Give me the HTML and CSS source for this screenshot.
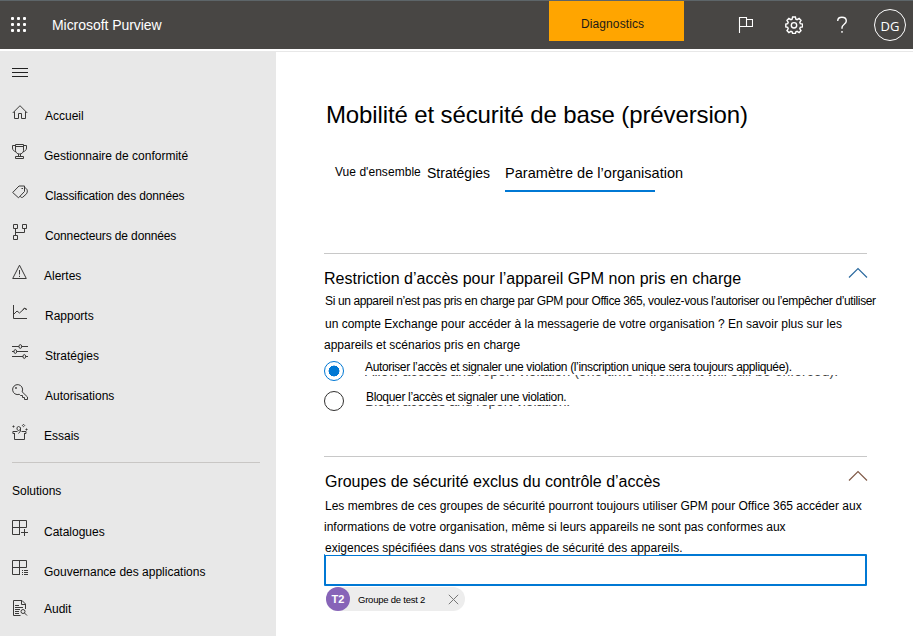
FILE: index.html
```html
<!DOCTYPE html>
<html lang="fr">
<head>
<meta charset="utf-8">
<title>Microsoft Purview</title>
<link rel="stylesheet" href="styles.css">
</head>
<body>
<header class="topbar">
  <svg class="waffle" width="16" height="16" viewBox="0 0 16 16"><g fill="#fff"><rect x="0" y="0" width="3" height="3" rx="1"/><rect x="6" y="0" width="3" height="3" rx="1"/><rect x="12" y="0" width="3" height="3" rx="1"/><rect x="0" y="6" width="3" height="3" rx="1"/><rect x="6" y="6" width="3" height="3" rx="1"/><rect x="12" y="6" width="3" height="3" rx="1"/><rect x="0" y="12" width="3" height="3" rx="1"/><rect x="6" y="12" width="3" height="3" rx="1"/><rect x="12" y="12" width="3" height="3" rx="1"/></g></svg>
  <span class="brand">Microsoft Purview</span>
  <div class="diag">Diagnostics</div>
  <div class="tools">
    <svg class="flag" width="16" height="18" viewBox="0 0 16 18"><path d="M2.500 17V1.500H9.500V10.500H2.500M9.500 3.500H15.500V10.500H9.500V8" /></svg>
    <svg class="gear" width="18" height="18" viewBox="0 0 18 18"><path d="M7.600 1h2.800l.5 2.200 1.200.5 2-1.200 1.900 1.900-1.200 2 .5 1.200 2.200.5v2.800l-2.200.5-.5 1.200 1.200 2-1.900 1.900-2-1.200-1.200.5-.5 1.700H7.600l-.5-1.700-1.200-.5-2 1.200L2 14.600l1.200-2-.5-1.200L.8 10.900V8.100l1.900-.5.5-1.200-1.200-2 1.900-1.900 2 1.200 1.200-.5z"/><circle cx="9" cy="9.300" r="2.700"/></svg>
    <svg class="help" width="12" height="18" viewBox="0 0 12 18"><path d="M1.700 5C1.700 2.700 3.300 1.300 5.900 1.300S10.300 2.800 10.300 4.900C10.300 8.200 6 8.300 6 11.800V12.700M6 15V16.700"/></svg>
    <span class="avatar">DG</span>
  </div>
</header>
<div class="shell">
  <aside class="side">
    <svg class="burger" width="16" height="10" viewBox="0 0 16 10"><path d="M0 .5H16M0 4.500H16M0 8.500H16"/></svg>
    <nav class="nav">
      <a class="item"><svg class="ico" viewBox="0 0 16 16"><path d="M.7 9 8 1.700 15.300 9M2.500 7.500V14.500H6.500V9.500H9.500V14.500H13.500V7.500"/></svg><span class="in">Accueil</span></a>
      <a class="item"><svg class="ico" viewBox="0 0 16 16"><path d="M3.500.5H11.500V6.500C11.500 8.500 9.800 10 7.500 10S3.500 8.500 3.500 6.500ZM3.500 1.500H.5V4C.5 6 2 7.500 4 7.500M11.500 1.500H14.500V4C14.500 6 13 7.500 11 7.500M6.500 10V12.500M8.500 10V12.500M3.500 14.500V12.500H11.500V14.500ZM3 2.500H12"/></svg><span>Gestionnaire de conformité</span></a>
      <a class="item"><svg class="ico" viewBox="0 0 16 16"><path d="M.7 8.500 7 2H12.500V7.500L6.500 13.800ZM12.500 3.500C15.500 4.500 16 7.500 14.500 9.800L10.800 13.200C10 13.800 8.800 13.500 8.200 12.300M9.500 4.500H11"/></svg><span class="in tight">Classification des données</span></a>
      <a class="item"><svg class="ico" viewBox="0 0 16 16"><path d="M1.500.5H5.500V4.500H1.500ZM10.500.5H14.500V4.500H10.500ZM1.500 11.500H5.500V15.500H1.500ZM3.500 4.500V11.500M3.500 8.500H12.500V4.500"/></svg><span class="in tight">Connecteurs de données</span></a>
      <a class="item"><svg class="ico" viewBox="0 0 16 16"><path d="M7.500 1.200 14.300 14.500H.7ZM7.500 6V10.500M7.500 11.800V13"/></svg><span>Alertes</span></a>
      <a class="item"><svg class="ico" viewBox="0 0 16 16"><path d="M1.500 1V14.500H15M1.500 10.500 5 7 7.500 9 12.500 4.500 14.500 5.500M11 5.500 12.500 4 15 5.500"/></svg><span class="in">Rapports</span></a>
      <a class="item"><svg class="ico" viewBox="0 0 16 16"><path d="M0 2.500H7M9.500 2.500H16M0 7.500H2M4.500 7.500H16M0 12.500H11M13.500 12.500H16"/><ellipse cx="8.300" cy="2.500" rx="1.300" ry="2"/><ellipse cx="3.300" cy="7.500" rx="1.300" ry="2"/><ellipse cx="12.300" cy="12.500" rx="1.300" ry="2"/></svg><span class="in">Stratégies</span></a>
      <a class="item"><svg class="ico" viewBox="0 0 16 16"><path d="M10 7.700 15.500 13V15.500H12.500V13.500H10.500V11.500H8.500L7.300 10.300A5 5 0 1 1 10.300 7.300L10 8"/><circle cx="4" cy="4" r=".6"/></svg><span class="in">Autorisations</span></a>
      <a class="item"><svg class="ico" viewBox="0 0 16 16"><path d="M2.500 9V15.500H12.500V9M5.500 7.500H.9V9.500H3M9.500 7.500H14V9.500H12M6.500 9.500 8.500 7V4.500M5 3.500 6.500 2.500 8.500 3.500V5.500L6.500 6.500 5 5.500ZM11.500.3 12.700 1.500 11.500 2.700 10.300 1.500ZM1.500 1.500V3.500M.5 2.500H2.500M14.500 4.500V6.500M13.500 5.500H15.500"/></svg><span>Essais</span></a>
    </nav>
    <hr class="rule">
    <div class="group">Solutions</div>
    <nav class="nav2">
      <a class="item"><svg class="ico" viewBox="0 0 16 16"><path d="M8 14.500H.5V.5H14.500V7.500H.5M7.500.5V14.500M12.500 9V16M9 12.500H16"/></svg><span>Catalogues</span></a>
      <a class="item"><svg class="ico" viewBox="0 0 16 16"><path d="M8 14.500H.5V.5H14.500V7.500H.5M7.500.5V14.500M10 10.500H11M12 10.500H16M10 12.500H11M12 12.500H16M10 14.500H11M12 14.500H16"/></svg><span>Gouvernance des applications</span></a>
      <a class="item audit"><svg class="ico" viewBox="0 0 16 16"><path d="M8.500 15.500H1.500V.5H10L13.500 4V9M9.500.5V4.500H13.500M3 5.500H7M3 7.500H11M3 9.500H8M3 11.500H7M3 13.500H7"/><circle cx="11" cy="11.500" r="2"/><path d="M12.500 13 15 15.500"/></svg><span>Audit</span></a>
    </nav>
  </aside>
  <main class="main">
    <h1>Mobilité et sécurité de base (préversion)</h1>
    <div class="tabs">
      <span class="tab small">Vue d'ensemble</span>
      <span class="tab">Stratégies</span>
      <span class="tab active">Paramètre de l’organisation</span>
    </div>
    <section class="panel first">
      <div class="head"><h2>Restriction d’accès pour l’appareil GPM non pris en charge</h2><svg class="chev blue" width="20" height="12" viewBox="0 0 20 12"><path d="M1 10.500 10 1.500 19 10.500"/></svg></div>
      <p class="line a1">Si un appareil n’est pas pris en charge par GPM pour Office 365, voulez-vous l’autoriser ou l’empêcher d’utiliser</p>
      <p class="line a2">un compte Exchange pour accéder à la messagerie de votre organisation ? En savoir plus sur les</p>
      <p class="line a3">appareils et scénarios pris en charge</p>
      <div class="option"><i class="radio on"></i><div class="text"><span class="o1">Autoriser l’accès et signaler une violation (l’inscription unique sera toujours appliquée).</span><span class="ghost"><span>Allow access and report violation (one-time enrollment will still be enforced).</span></span></div></div>
      <div class="option"><i class="radio"></i><div class="text"><span class="o2">Bloquer l’accès et signaler une violation.</span><span class="ghost g2"><span>Block access and report violation.</span></span></div></div>
    </section>
    <section class="panel second">
      <div class="head"><h2>Groupes de sécurité exclus du contrôle d’accès</h2><svg class="chev brown" width="20" height="12" viewBox="0 0 20 12"><path d="M1 10.500 10 1.500 19 10.500"/></svg></div>
      <p class="line b1">Les membres de ces groupes de sécurité pourront toujours utiliser GPM pour Office 365 accéder aux</p>
      <p class="line b2">informations de votre organisation, même si leurs appareils ne sont pas conformes aux</p>
      <p class="line b3">exigences spécifiées dans vos stratégies de sécurité des appareils.</p>
      <div class="field"></div>
      <div class="chip"><b>T2</b><span>Groupe de test 2</span><svg width="11" height="11" viewBox="0 0 11 11"><path d="M.8.8 10.200 10.200M10.200.8.8 10.200"/></svg></div>
    </section>
  </main>
</div>
</body>
</html>
```
FILE: styles.css
```css
* { box-sizing: border-box; }
body {
  margin: 0;
  width: 913px;
  height: 636px;
  overflow: hidden;
  background: #fff;
  color: #000;
  font: 12px "Liberation Sans", Arial, sans-serif;
}
h1, h2, p { margin: 0; font-weight: 400; white-space: nowrap; }
svg { display: block; flex: none; fill: none; }

.topbar {
  display: flex;
  height: 49px;
  background: #484644;
  border-top: 1px solid #5d6569;
  color: #fff;
}
.waffle { margin: 16px 0 0 11px; }
.brand { width: 522px; padding-left: 25px; font-size: 14px; line-height: 48px; letter-spacing: -.05px; }
.diag {
  width: 135px;
  height: 40px;
  padding-left: 32px;
  background: #ffa500;
  color: #1b1a19;
  line-height: 46px;
  letter-spacing: .1px;
}
.tools { display: flex; align-items: flex-start; stroke: #fff; stroke-width: 1.1; }
.flag { margin: 15px 0 0 53px; }
.gear { margin: 15px 0 0 32px; stroke-width: 1.4; }
.help { margin: 15px 0 0 33px; stroke-width: 1.4; }
.avatar {
  width: 32px;
  height: 32px;
  margin: 8px 0 0 26px;
  border: 1px solid #fff;
  border-radius: 50%;
  font: 13px/32px "Open Sans", "Noto Sans", sans-serif;
  text-align: center;
}

.shell { display: flex; height: 585px; margin-top: 2px; }
.side { width: 276px; height: 585px; background: #e8e8e8; }
.burger { margin: 17px 0 0 12px; stroke: #222; }
.nav { margin-top: 18px; }
.item { display: flex; height: 40px; align-items: center; line-height: 40px; white-space: nowrap; }
.item span { padding-left: 16px; }
.item .in { padding-left: 17px; }
.item .tight { letter-spacing: -.13px; }
.ico { width: 16px; height: 16px; margin: -8px 0 0 12px; stroke: #3b3a39; }
.rule { width: 248px; height: 1px; margin: 6px 0 0 12px; border: 0; background: #c8c6c4; }
.group { height: 49px; padding-left: 12px; line-height: 56px; }
.audit { height: 34px; line-height: 34px; }
.audit .ico { margin-top: -2px; }

.main { flex: 1; padding-left: 48px; border-top: 1px solid #e8e8e8; }
h1 { height: 32px; margin-top: 47px; padding-left: 2px; font-size: 24px; line-height: 32px; letter-spacing: -.12px; }
.tabs { display: flex; height: 41px; margin: 20px 0 0 11px; }
.tab { height: 41px; margin-right: 15px; font-size: 14px; line-height: 44px; white-space: nowrap; }
.small { width: 92px; margin: 0; font-size: 12px; line-height: 42px; letter-spacing: .04px; }
.active {
  width: 150px;
  margin: 0;
  font-size: 14.500px;
  letter-spacing: .03px;
  background: linear-gradient(#0078d4, #0078d4) 0 39px / 150px 2px no-repeat;
}
.panel { width: 543px; border-top: 1px solid #c8c8c8; }
.first { height: 203px; margin-top: 61px; }
.head { display: flex; justify-content: space-between; height: 37px; }
h2 { font-size: 16px; line-height: 49px; }
.second h2 { padding-left: 1px; letter-spacing: -.02px; }
.chev { margin: 13px -1px 0 0; stroke-width: 1.2; }
.blue { stroke: #2c6a9f; }
.brown { stroke: #805a48; }
.line { height: 21px; line-height: 21px; }
.a1 { height: 23px; padding-left: 1px; letter-spacing: -.372px; }
.a2 { padding-left: 1px; }
.option { display: flex; height: 30px; }
.radio { width: 20px; height: 20px; margin-top: 5px; border: 1px solid #323130; border-radius: 50%; }
.on { border-color: #0078d4; background: radial-gradient(circle, #0078d4 5.200px, transparent 5.700px); }
.text { padding-left: 21px; white-space: nowrap; }
.text > span { display: block; }
.text .o1, .text .o2 { height: 19px; line-height: 22px; letter-spacing: -.355px; }
.text .o2 { padding-left: 1px; letter-spacing: -.33px; }
.ghost { height: 4px; overflow: hidden; color: #444; font-size: 14px; letter-spacing: .04px; }
.ghost span { display: block; margin-top: -11px; line-height: 14px; }
.g2 { letter-spacing: -.1px; }
.second .head { height: 39px; }
.b1, .b3 { padding-left: 1px; }
.b3 { position: relative; z-index: 1; }
.field { position: relative; height: 32px; margin-top: -5px; border: 2px solid #0078d4; border-radius: 1px; }
.field::before { content: ""; position: absolute; top: -2px; left: -1px; width: 334px; height: 1px; background: #fff; }
.chip {
  display: flex;
  width: 139px;
  height: 24px;
  margin: 1px 0 0 2px;
  align-items: center;
  border-radius: 12px;
  background: #ededed;
}
.chip b { width: 24px; height: 24px; border-radius: 50%; background: #8764b8; color: #fff; font-size: 11px; line-height: 25px; text-align: center; }
.chip span { width: 90px; padding-left: 8px; font-size: 9.500px; letter-spacing: -.23px; white-space: nowrap; }
.chip svg { margin-left: 8px; stroke: #777; }
```
